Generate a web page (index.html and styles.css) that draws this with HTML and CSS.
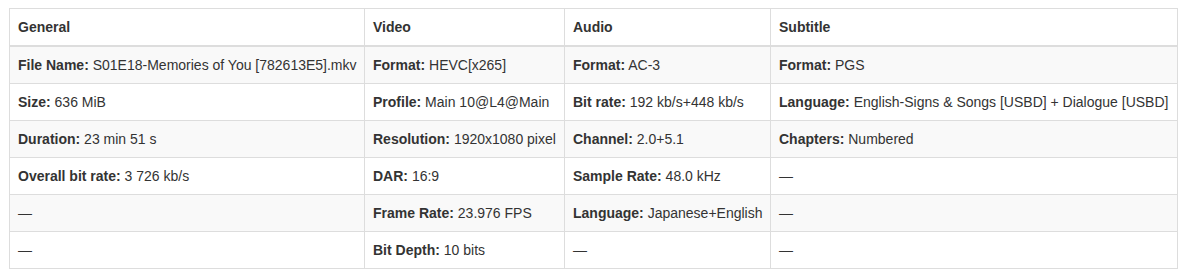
FILE: index.html
```html
<!DOCTYPE html>
<html>
<head>
<meta charset="utf-8">
<link rel="stylesheet" href="styles.css">
</head>
<body>
<table class="info">
  <colgroup>
    <col class="c1"><col class="c2"><col class="c3"><col class="c4">
  </colgroup>
  <thead>
    <tr><th>General</th><th>Video</th><th>Audio</th><th>Subtitle</th></tr>
  </thead>
  <tbody>
    <tr>
      <td><b>File Name:</b> S01E18-Memories of You [782613E5].mkv</td>
      <td><b>Format:</b> HEVC[x265]</td>
      <td><b>Format:</b> AC-3</td>
      <td><b>Format:</b> PGS</td>
    </tr>
    <tr>
      <td><b>Size:</b> 636 MiB</td>
      <td><b>Profile:</b> Main 10@L4@Main</td>
      <td><b>Bit rate:</b> 192 kb/s+448 kb/s</td>
      <td><b>Language:</b> English-Signs &amp; Songs [USBD] + Dialogue [USBD]</td>
    </tr>
    <tr>
      <td><b>Duration:</b> 23 min 51 s</td>
      <td><b>Resolution:</b> 1920x1080 pixel</td>
      <td><b>Channel:</b> 2.0+5.1</td>
      <td><b>Chapters:</b> Numbered</td>
    </tr>
    <tr>
      <td><b>Overall bit rate:</b> 3 726 kb/s</td>
      <td><b>DAR:</b> 16:9</td>
      <td><b>Sample Rate:</b> 48.0 kHz</td>
      <td>—</td>
    </tr>
    <tr>
      <td>—</td>
      <td><b>Frame Rate:</b> 23.976 FPS</td>
      <td><b>Language:</b> Japanese+English</td>
      <td>—</td>
    </tr>
    <tr>
      <td>—</td>
      <td><b>Bit Depth:</b> 10 bits</td>
      <td>—</td>
      <td>—</td>
    </tr>
  </tbody>
</table>
</body>
</html>
```

FILE: styles.css
```css
html, body {
  margin: 0;
  padding: 0;
  background: #fff;
}
body {
  padding: 8px 10px 8px 9px;
  font-family: "Liberation Sans", Arial, Helvetica, sans-serif;
  font-size: 14px;
  line-height: 20px;
  color: #333;
}
.info {
  width: 1168px;
  border-collapse: collapse;
  border-spacing: 0;
  table-layout: fixed;
  border: 1px solid #ddd;
}
.c1 { width: 355px; }
.c2 { width: 200px; }
.c3 { width: 206px; }
.c4 { width: 407px; }
.info th,
.info td {
  padding: 8px;
  border: 1px solid #ddd;
  text-align: left;
  vertical-align: top;
  white-space: nowrap;
}
.info th {
  font-weight: bold;
  border-bottom: 2px solid #ddd;
}
.info b {
  font-weight: bold;
}
.info tbody tr:nth-child(odd) {
  background: #f9f9f9;
}
```
